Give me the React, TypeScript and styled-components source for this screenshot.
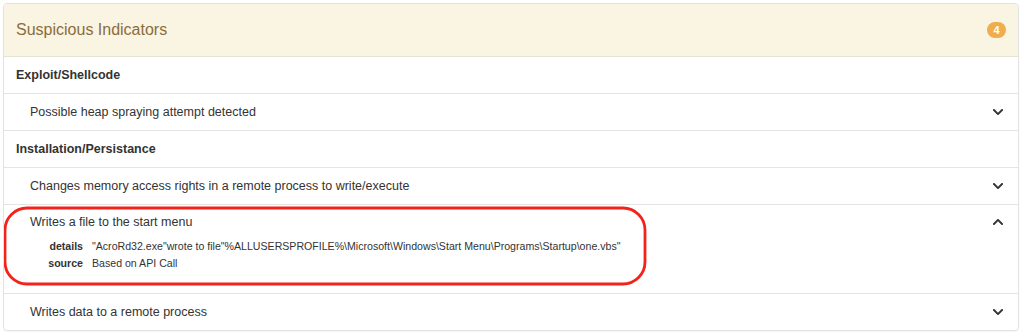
import React from "react";
import styled, { createGlobalStyle } from "styled-components";
import { FaChevronDown, FaChevronUp } from "react-icons/fa";

const GlobalStyle = createGlobalStyle`
  html, body {
    margin: 0;
    padding: 0;
    background: #fff;
  }
  body {
    font-family: "Liberation Sans", Arial, sans-serif;
    color: #333;
  }
`;

const Page = styled.div`
  padding: 3px 5px 3px 3px;
  width: 1024px;
  height: 332px;
  box-sizing: border-box;
`;

const Panel = styled.div`
  position: relative;
  border: 1px solid #e2e2e2;
  border-radius: 4px;
  overflow: hidden;
  box-shadow: 0 1px 1px rgba(0, 0, 0, 0.04);
`;

const Header = styled.div`
  display: flex;
  align-items: center;
  justify-content: space-between;
  height: 52px;
  padding: 0 12px 0 12px;
  background: #faf4e2;
  border-bottom: 1px solid #e6e2d6;
`;

const Title = styled.h3`
  margin: 0;
  font-size: 16px;
  font-weight: normal;
  color: #8a6d3b;
`;

const Badge = styled.span`
  display: inline-flex;
  align-items: center;
  justify-content: center;
  min-width: 19px;
  height: 16px;
  border-radius: 9px;
  background: #f0ad4e;
  color: #fff;
  font-size: 11px;
  font-weight: bold;
`;

const Row = styled.div<{ $group?: boolean }>`
  display: flex;
  align-items: center;
  justify-content: space-between;
  height: 36px;
  padding: 0 14px 0 ${(p) => (p.$group ? 12 : 26)}px;
  border-bottom: 1px solid #e4e4e4;
  font-size: 12.5px;
  font-weight: ${(p) => (p.$group ? "bold" : "normal")};
  color: #333;
  &:last-child {
    border-bottom: none;
  }
`;

const Expanded = styled.div`
  position: relative;
  padding: 10px 14px 10px 26px;
  border-bottom: 1px solid #e4e4e4;
  height: 68px;
`;

const ExpandedTop = styled.div`
  display: flex;
  align-items: center;
  justify-content: space-between;
  font-size: 12.5px;
`;

const DetailGrid = styled.div`
  display: grid;
  grid-template-columns: 53px auto;
  column-gap: 9px;
  row-gap: 5px;
  margin-top: 11px;
  font-size: 10.6px;
`;

const Key = styled.span`
  text-align: right;
  font-weight: bold;
`;

const Chevron = styled.span`
  display: inline-flex;
  color: #333;
  font-size: 12px;
`;

const Annotation = styled.svg`
  position: absolute;
  left: -1px;
  top: 1px;
  pointer-events: none;
`;

const App: React.FC = () => {
  return (
    <Page>
      <GlobalStyle />
      <Panel>
        <Header>
          <Title>Suspicious Indicators</Title>
          <Badge>4</Badge>
        </Header>
        <Row $group>Exploit/Shellcode</Row>
        <Row>
          Possible heap spraying attempt detected
          <Chevron><FaChevronDown /></Chevron>
        </Row>
        <Row $group>Installation/Persistance</Row>
        <Row>
          Changes memory access rights in a remote process to write/execute
          <Chevron><FaChevronDown /></Chevron>
        </Row>
        <Expanded>
          <ExpandedTop>
            Writes a file to the start menu
            <Chevron><FaChevronUp /></Chevron>
          </ExpandedTop>
          <DetailGrid>
            <Key>details</Key>
            <span>"AcroRd32.exe"wrote to file"%ALLUSERSPROFILE%\Microsoft\Windows\Start Menu\Programs\Startup\one.vbs"</span>
            <Key>source</Key>
            <span>Based on API Call</span>
          </DetailGrid>
          <Annotation width="646" height="82" viewBox="0 0 646 82">
            <rect x="2" y="2" width="640" height="76" rx="22" ry="22" fill="none" stroke="#f3231c" strokeWidth="2.8" />
          </Annotation>
        </Expanded>
        <Row>
          Writes data to a remote process
          <Chevron><FaChevronDown /></Chevron>
        </Row>
      </Panel>
    </Page>
  );
};

export default App;
